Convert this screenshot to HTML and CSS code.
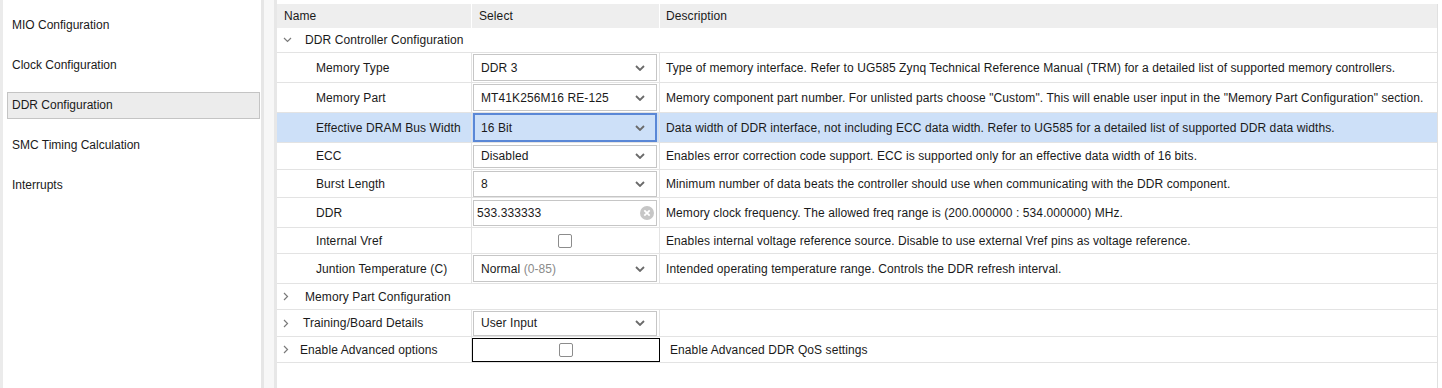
FILE: index.html
```html
<!DOCTYPE html>
<html>
<head>
<meta charset="utf-8">
<link rel="stylesheet" href="styles.css">
</head>
<body>
<div class="app">
  <nav class="sidebar">
    <div class="nav-item">MIO Configuration</div>
    <div class="nav-item">Clock Configuration</div>
    <div class="nav-item active">DDR Configuration</div>
    <div class="nav-item">SMC Timing Calculation</div>
    <div class="nav-item">Interrupts</div>
  </nav>
  <div class="splitter"></div>
  <main class="main">
    <div class="table">
      <div class="row head">
        <div class="cell name">Name</div>
        <div class="cell sel">Select</div>
        <div class="cell desc">Description</div>
      </div>
      <div class="row group h25">
        <div class="cell name gname"><span class="chev"><svg width="9" height="6" viewBox="0 0 9 6"><path d="M1 1 L4.5 4.5 L8 1" fill="none" stroke="#7a7a7a" stroke-width="1.2"/></svg></span>DDR Controller Configuration</div>
        <div class="cell sel"></div>
        <div class="cell desc"></div>
      </div>
      <div class="row h30">
        <div class="cell name child">Memory Type</div>
        <div class="cell sel"><div class="combo"><span>DDR 3</span><svg class="dd" width="10" height="6" viewBox="0 0 10 6"><path d="M1 1 L5 5 L9 1" fill="none" stroke="#6a6a6a" stroke-width="1.8"/></svg></div></div>
        <div class="cell desc">Type of memory interface. Refer to UG585 Zynq Technical Reference Manual (TRM) for a detailed list of supported memory controllers.</div>
      </div>
      <div class="row h30">
        <div class="cell name child">Memory Part</div>
        <div class="cell sel"><div class="combo"><span>MT41K256M16 RE-125</span><svg class="dd" width="10" height="6" viewBox="0 0 10 6"><path d="M1 1 L5 5 L9 1" fill="none" stroke="#6a6a6a" stroke-width="1.8"/></svg></div></div>
        <div class="cell desc">Memory component part number. For unlisted parts choose "Custom". This will enable user input in the "Memory Part Configuration" section.</div>
      </div>
      <div class="row h30 selected">
        <div class="cell name child">Effective DRAM Bus Width</div>
        <div class="cell sel"><div class="combo focus"><span>16 Bit</span><svg class="dd" width="10" height="6" viewBox="0 0 10 6"><path d="M1 1 L5 5 L9 1" fill="none" stroke="#6a6a6a" stroke-width="1.8"/></svg></div></div>
        <div class="cell desc">Data width of DDR interface, not including ECC data width. Refer to UG585 for a detailed list of supported DDR data widths.</div>
      </div>
      <div class="row h27">
        <div class="cell name child">ECC</div>
        <div class="cell sel"><div class="combo"><span>Disabled</span><svg class="dd" width="10" height="6" viewBox="0 0 10 6"><path d="M1 1 L5 5 L9 1" fill="none" stroke="#6a6a6a" stroke-width="1.8"/></svg></div></div>
        <div class="cell desc">Enables error correction code support. ECC is supported only for an effective data width of 16 bits.</div>
      </div>
      <div class="row h28">
        <div class="cell name child">Burst Length</div>
        <div class="cell sel"><div class="combo"><span>8</span><svg class="dd" width="10" height="6" viewBox="0 0 10 6"><path d="M1 1 L5 5 L9 1" fill="none" stroke="#6a6a6a" stroke-width="1.8"/></svg></div></div>
        <div class="cell desc">Minimum number of data beats the controller should use when communicating with the DDR component.</div>
      </div>
      <div class="row h30">
        <div class="cell name child">DDR</div>
        <div class="cell sel"><div class="combo text"><span>533.333333</span><svg class="clear" width="14" height="14" viewBox="0 0 14 14"><circle cx="7" cy="7" r="7" fill="#c6c6c6"/><path d="M4.3 4.3 L9.7 9.7 M9.7 4.3 L4.3 9.7" stroke="#fff" stroke-width="1.8"/></svg></div></div>
        <div class="cell desc">Memory clock frequency. The allowed freq range is (200.000000 : 534.000000) MHz.</div>
      </div>
      <div class="row h26">
        <div class="cell name child">Internal Vref</div>
        <div class="cell sel center"><span class="checkbox"></span></div>
        <div class="cell desc">Enables internal voltage reference source. Disable to use external Vref pins as voltage reference.</div>
      </div>
      <div class="row h30">
        <div class="cell name child">Juntion Temperature (C)</div>
        <div class="cell sel"><div class="combo"><span>Normal <span class="muted">(0-85)</span></span><svg class="dd" width="10" height="6" viewBox="0 0 10 6"><path d="M1 1 L5 5 L9 1" fill="none" stroke="#6a6a6a" stroke-width="1.8"/></svg></div></div>
        <div class="cell desc">Intended operating temperature range. Controls the DDR refresh interval.</div>
      </div>
      <div class="row h26 group">
        <div class="cell name gname wide"><span class="chev"><svg width="6" height="9" viewBox="0 0 6 9"><path d="M1 1 L4.5 4.5 L1 8" fill="none" stroke="#7a7a7a" stroke-width="1.2"/></svg></span>Memory Part Configuration</div>
      </div>
      <div class="row h27">
        <div class="cell name gname g2"><span class="chev"><svg width="6" height="9" viewBox="0 0 6 9"><path d="M1 1 L4.5 4.5 L1 8" fill="none" stroke="#7a7a7a" stroke-width="1.2"/></svg></span>Training/Board Details</div>
        <div class="cell sel"><div class="combo short"><span>User Input</span><svg class="dd" width="10" height="6" viewBox="0 0 10 6"><path d="M1 1 L5 5 L9 1" fill="none" stroke="#6a6a6a" stroke-width="1.8"/></svg></div></div>
        <div class="cell desc"></div>
      </div>
      <div class="row h26">
        <div class="cell name gname g3"><span class="chev"><svg width="6" height="9" viewBox="0 0 6 9"><path d="M1 1 L4.5 4.5 L1 8" fill="none" stroke="#7a7a7a" stroke-width="1.2"/></svg></span>Enable Advanced options</div>
        <div class="cell sel center cellfocus"><span class="checkbox"></span></div>
        <div class="cell desc far">Enable Advanced DDR QoS settings</div>
      </div>
      <div class="filler"></div>
    </div>
  </main>
</div>
</body>
</html>
```

FILE: styles.css
```css
* { box-sizing: border-box; }
html, body { margin: 0; padding: 0; background: #fff; }
body {
  font-family: "Liberation Sans", Arial, sans-serif;
  font-size: 12px;
  letter-spacing: 0.09px;
  color: #1a1a1a;
  width: 1442px;
  height: 388px;
  overflow: hidden;
}
.app {
  display: flex;
  height: 388px;
}
.sidebar {
  width: 264px;
  flex: none;
  border-left: 3px solid #ebebeb;
  border-right: 3px solid #e6e6e6;
  padding: 12px 1px 0 4px;
  display: flex;
  flex-direction: column;
  gap: 13px;
  background: #fff;
}
.nav-item {
  height: 27px;
  line-height: 25px;
  padding-left: 4px;
  border: 1px solid transparent;
  white-space: nowrap;
  letter-spacing: 0;
}
.nav-item.active {
  background: #ececec;
  border-color: #c4c4c4;
}
.splitter {
  width: 13px;
  flex: none;
  background: #f7f7f7;
  border-right: 3px solid #e7e7e7;
}
.main {
  flex: 1;
  padding-top: 4px;
  padding-right: 4px;
  background: #fff;
}
.table {
  border-right: 1px solid #e0e0e0;
  height: 100%;
  display: flex;
  flex-direction: column;
}
.row {
  display: grid;
  grid-template-columns: 195px 188px 1fr;
  border-bottom: 1px solid #e3e3e3;
  flex: none;
}
.row.head {
  height: 24px;
  background: #eeeeee;
  border-bottom: none;
}
.row.head .cell { border-right-color: #fff; }
.h25 { height: 25px; }
.h26 { height: 26px; }
.h27 { height: 27px; }
.h28 { height: 28px; }
.h30 { height: 30px; }
.cell {
  display: flex;
  align-items: center;
  border-right: 1px solid #e3e3e3;
  white-space: nowrap;
  min-width: 0;
}
.cell.desc { border-right: none; padding-left: 6px; }
.cell.desc.far { padding-left: 10px; }
.row.head .name { padding-left: 7px; }
.row.head .sel { padding-left: 7px; }
.group .cell { border-right: none; }
.name.child { padding-left: 39px; }
.name.gname { padding-left: 6px; }
.name.wide { grid-column: 1 / span 3; }
.chev {
  width: 22px;
  display: inline-flex;
  align-items: center;
  justify-content: flex-start;
  flex: none;
}
.g2 .chev { width: 20px; }
.g3 .chev { width: 17px; }
.selected { background: #cde0f8; }
.sel { padding: 0 2px 0 1px; }
.sel.center { justify-content: center; }
.combo {
  flex: 1;
  height: 27px;
  border: 1px solid #c6c6c6;
  background: #fff;
  display: flex;
  align-items: center;
  padding: 0 0 0 7px;
  position: relative;
}
.h27 .combo { height: 23px; }
.h28 .combo { height: 26px; }
.combo.short { height: 25px; }
.combo span { flex: 1; }
.combo .dd { margin-right: 11px; flex: none; }
.combo.focus {
  border: 2px solid #5a87d6;
  background: #cde0f8;
  height: 29px;
  padding-left: 6px;
}
.combo.focus .dd { margin-right: 10px; }
.combo.text { padding-left: 3px; height: 26px; }
.combo .clear { margin-right: 2px; flex: none; }
.muted { color: #8a8a8a; }
.checkbox {
  width: 14px;
  height: 14px;
  border: 1px solid #8c8c8c;
  border-radius: 2px;
  background: #fff;
}
.cellfocus {
  border: 1px solid #000;
  margin: 1px 0 0 0;
}
.filler { flex: 1; }
```
